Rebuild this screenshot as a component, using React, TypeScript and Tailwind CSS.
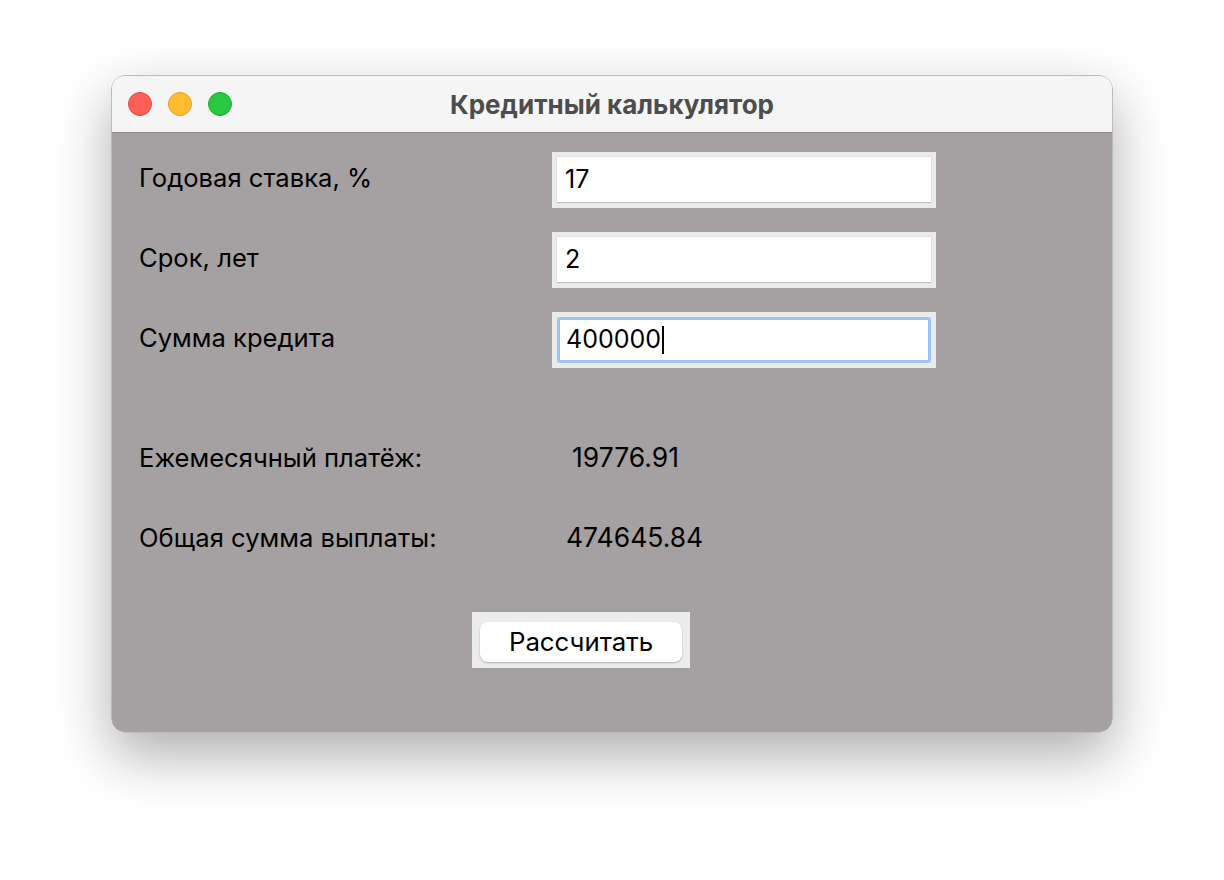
export default function App() {
  return (
    <div className="w-[1224px] h-[880px] bg-white pl-[111px] pt-[75px]" style={{ fontFamily: 'Inter, "Liberation Sans", sans-serif' }}>
      <div className="w-[1002px] h-[658px] rounded-[14px] border border-[#bdbbbb] overflow-hidden flex flex-col shadow-[0_22px_55px_rgba(0,0,0,0.32)]">
        {/* title bar */}
        <div className="h-[57px] shrink-0 bg-[#f5f5f5] border-b border-[#8b8888] flex items-center relative">
          <div className="flex items-center gap-[16px] pl-[16px]">
            <span className="w-[24px] h-[24px] rounded-full bg-[#fe5f57] border border-[#e2453e]" />
            <span className="w-[24px] h-[24px] rounded-full bg-[#febc2e] border border-[#e0a027]" />
            <span className="w-[24px] h-[24px] rounded-full bg-[#28c840] border border-[#1eab2f]" />
          </div>
          <div className="absolute inset-0 flex items-center justify-center text-[26px] font-bold text-[#4d4d4d] pointer-events-none">
            Кредитный калькулятор
          </div>
        </div>

        {/* body */}
        <div className="flex-1 bg-[#a5a0a1] pl-[27px] pt-[19px] text-black">
          <div className="flex flex-col gap-[24px]">
            <Row label="Годовая ставка, %" value="17" />
            <Row label="Срок, лет" value="2" />
            <Row label="Сумма кредита" value="400000" focused />
          </div>

          <div className="flex flex-col gap-[40px] mt-[70px]">
            <div className="h-[40px] flex items-center">
              <div className="w-[413px] text-[25.6px]">Ежемесячный платёж:</div>
              <div className="ml-[20px] text-[26.5px]">19776.91</div>
            </div>
            <div className="h-[40px] flex items-center">
              <div className="w-[413px] text-[25.6px]">Общая сумма выплаты:</div>
              <div className="ml-[14px] text-[26.5px]">474645.84</div>
            </div>
          </div>

          <div className="mt-[54px] ml-[333px] w-[218px] h-[56px] bg-[#ececec] flex items-center justify-center pt-[4px]">
            <button className="w-[202px] h-[40px] rounded-[8px] bg-white shadow-[0_1px_2px_rgba(0,0,0,0.25)] text-[25.8px] text-black">
              Рассчитать
            </button>
          </div>
        </div>
      </div>
    </div>
  )
}

function Row({ label, value, focused }: { label: string; value: string; focused?: boolean }) {
  return (
    <div className="h-[56px] flex items-center">
      <div className="w-[413px] text-[25.6px] -mt-[4px]">{label}</div>
      <div className="w-[384px] h-[56px] bg-[#ebebeb] p-[5px]">
        <div
          className={
            focused
              ? 'h-full bg-white rounded-[3px] border-[3px] border-[#9ec3f0] flex items-center pl-[6px] text-[25px]'
              : 'h-full bg-white border-b border-[#c4c4c4] shadow-[0_0_0_1px_#e2e2e2] flex items-center pl-[8px] text-[25px]'
          }
        >
          {value}
          {focused && <span className="w-[2px] h-[28px] bg-black ml-[1px]" />}
        </div>
      </div>
    </div>
  )
}
